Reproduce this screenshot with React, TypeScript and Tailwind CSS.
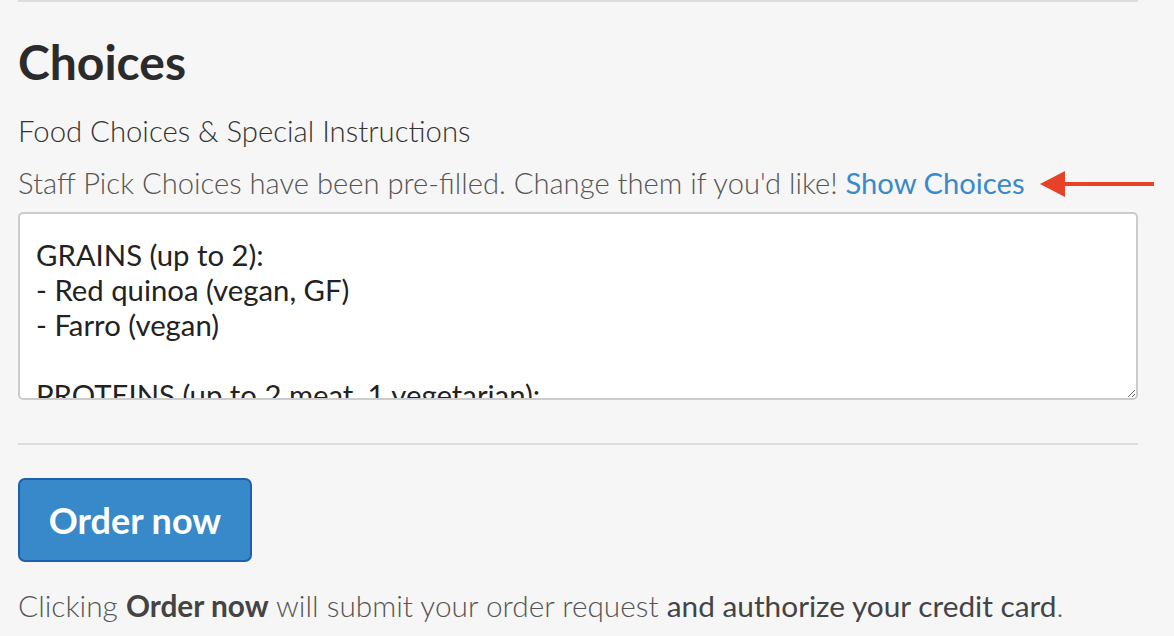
import React from "react";

const text = `GRAINS (up to 2):
- Red quinoa (vegan, GF)
- Farro (vegan)

PROTEINS (up to 2 meat, 1 vegetarian):
- Chicken
- Tofu`;

export default function App() {
  return (
    <div className="min-h-[636px] w-[1174px] bg-[#f6f6f6] font-['Lato',sans-serif] text-[#333] overflow-hidden">
      <div className="ml-[18px] w-[1120px]">
        <div className="h-[2px] bg-[#dddddd]" />
        <h2 className="mt-[32px] text-[48px] font-bold leading-[56px] text-[#2b2b2b]">Choices</h2>
        <p className="mt-[25px] text-[29.3px] font-light leading-[32px] text-[#333]">
          Food Choices &amp; Special Instructions
        </p>
        <div className="relative mt-[20px]">
          <p className="text-[29.2px] font-light leading-[32px] text-[#555]">
            Staff Pick Choices have been pre-filled. Change them if you'd like!{" "}
            <a className="font-normal text-[#3a8acb]">Show Choices</a>
          </p>
          <svg
            className="absolute left-[1022px] top-[3px]"
            width="116"
            height="28"
            viewBox="0 0 116 28"
          >
            <polygon points="0,14 25,1 25,27" fill="#e8412a" />
            <rect x="20" y="12" width="94" height="4" fill="#e8412a" />
          </svg>
        </div>
        <textarea
          readOnly
          defaultValue={text}
          className="mt-[13px] block h-[188px] w-[1120px] resize-y rounded-[5px] border-2 border-[#cccccc] bg-white px-[16px] pt-[23px] text-[29.3px] leading-[35px] text-[#222] outline-none overflow-hidden"
        />
        <div className="mt-[43px] h-[2px] bg-[#dddddd]" />
        <button className="mt-[33px] flex h-[84px] w-[234px] items-center justify-center rounded-[7px] border-2 border-[#1f5fae] bg-[#3789c9] text-[36px] font-bold text-white">
          Order now
        </button>
        <p className="mt-[27px] text-[29.8px] font-light leading-[34px] text-[#555]">
          Clicking <b className="font-bold text-[#444]">Order now</b> will submit your order request{" "}
          <span className="font-normal text-[#444]">and authorize your credit card</span>.
        </p>
      </div>
    </div>
  );
}
